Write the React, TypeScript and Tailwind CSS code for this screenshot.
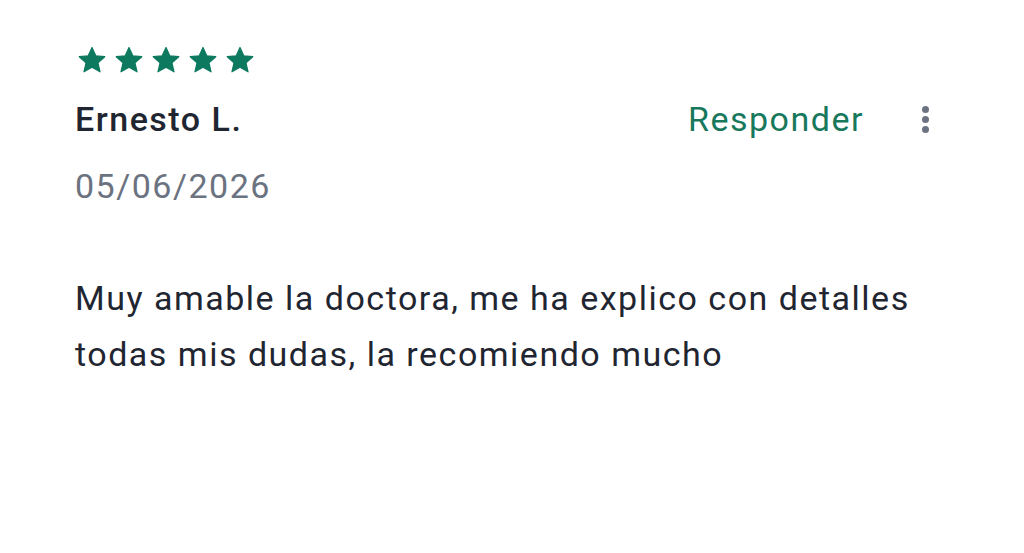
const STARS = [0, 1, 2, 3, 4];

function StarIcon() {
  return (
    <svg width="30" height="28" viewBox="0 0 24 23" className="shrink-0">
      <path
        d="M12 1.2l3.1 6.9 7.4.7-5.6 5 1.7 7.4L12 17.4l-6.6 3.8 1.7-7.4-5.6-5 7.4-.7z"
        fill="#0d7a5f"
        stroke="#0d7a5f"
        strokeWidth="1"
        strokeLinejoin="round"
      />
    </svg>
  );
}

export default function App() {
  return (
    <div
      className="w-[1024px] h-[553px] bg-white pt-[46px] pl-[75px] pr-[94px]"
      style={{ fontFamily: "Roboto, 'Noto Sans', sans-serif" }}
    >
      <div className="flex gap-[7px] h-[28px] ml-[2px]">
        {STARS.map((i) => (
          <StarIcon key={i} />
        ))}
      </div>

      <div className="mt-[25px] flex items-center justify-between h-[40px]">
        <span className="text-[34px] leading-[40px] tracking-[1.5px] font-medium text-[#1f2631]">
          Ernesto L.
        </span>
        <div className="flex items-center gap-[58px]">
          <button type="button" className="text-[34px] leading-[40px] tracking-[1.5px] text-[#17785c]">
            Responder
          </button>
          <div className="flex flex-col gap-[3px] w-[8px]">
            <span className="w-[7px] h-[7px] rounded-full bg-[#6b7280]" />
            <span className="w-[7px] h-[7px] rounded-full bg-[#6b7280]" />
            <span className="w-[7px] h-[7px] rounded-full bg-[#6b7280]" />
          </div>
        </div>
      </div>

      <div className="mt-[27px] text-[34px] leading-[40px] tracking-[1.5px] text-[#6b7280]">
        05/06/2026
      </div>

      <p className="mt-[64px] text-[34px] leading-[56px] tracking-[1.5px] text-[#1f2631] max-w-[860px]">
        Muy amable la doctora, me ha explico con detalles todas mis dudas, la recomiendo mucho
      </p>
    </div>
  );
}
